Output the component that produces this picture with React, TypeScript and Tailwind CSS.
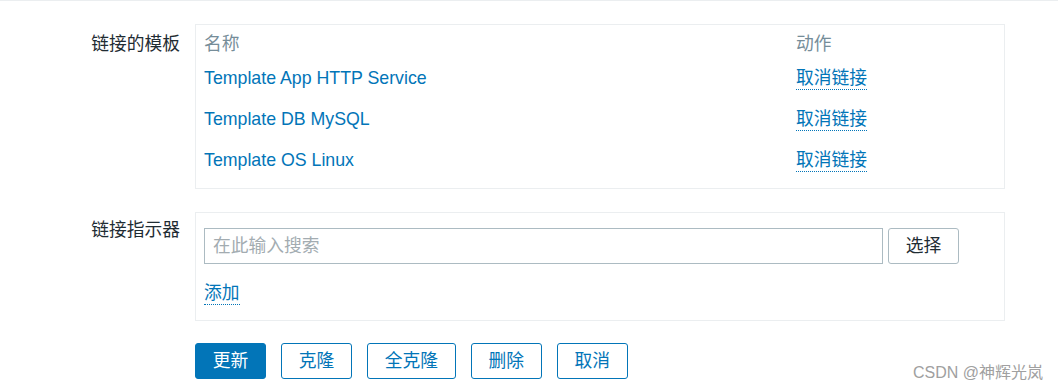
import React from "react";

const font = "font-['Liberation_Sans','Noto_Sans_CJK_SC',sans-serif]";

function Link({ children }: { children: React.ReactNode }) {
  return (
    <span className="block leading-[22px] text-[#0275b8] border-b border-dotted border-[#0275b8]">
      {children}
    </span>
  );
}

const templates = ["Template App HTTP Service", "Template DB MySQL", "Template OS Linux"];

export default function App() {
  return (
    <div className={`relative w-[1058px] h-[389px] bg-white border-t border-[#ebeef0] text-[17.75px] leading-[22px] text-[#1f2c33] ${font}`}>
      <div className="grid grid-cols-[180px_810px] gap-x-[15px] pt-[23px] items-start">
        {/* Row 1 */}
        <div className="text-right pt-[9px]">链接的模板</div>
        <div className="border border-[#ebeef0] px-[8px] pt-[8px] pb-[16px]">
          <div className="grid grid-cols-[592px_1fr]">
            <div className="text-[#768d99]">名称</div>
            <div className="text-[#768d99]">动作</div>
          </div>
          {templates.map((t, i) => (
            <div key={t} className={`grid grid-cols-[592px_1fr] items-start ${i === 0 ? "mt-[12px]" : "mt-[18px]"}`}>
              <div className="text-[#0275b8]">{t}</div>
              <div className="flex">
                <Link>取消链接</Link>
              </div>
            </div>
          ))}
        </div>

        {/* Row 2 */}
        <div className="text-right pt-[7px] mt-[23px]">链接指示器</div>
        <div className="mt-[23px] border border-[#ebeef0] px-[8px] pt-[15px] pb-[15px]">
          <div className="flex items-center gap-[5px]">
            <div className="w-[679px] h-[36px] border border-[#acbbc2] px-[8px] flex items-center text-[#a3acb1]">
              在此输入搜索
            </div>
            <button className="h-[36px] px-[16.75px] border border-[#acbbc2] rounded-[3px] bg-white text-[#1f2c33]">
              选择
            </button>
          </div>
          <div className="mt-[18px] flex">
            <Link>添加</Link>
          </div>
        </div>

        {/* Buttons */}
        <div />
        <div className="mt-[22px] flex gap-[15px]">
          <button className="h-[36px] px-[16.75px] rounded-[3px] bg-[#0275b8] border border-[#0275b8] text-white">更新</button>
          {["克隆", "全克隆", "删除", "取消"].map((b) => (
            <button key={b} className="h-[36px] px-[16.75px] rounded-[3px] bg-white border border-[#0275b8] text-[#0275b8]">
              {b}
            </button>
          ))}
        </div>
      </div>

      <div className="absolute right-[15px] bottom-[6px] text-[16px] leading-[20px] text-[#a0a0a0]">
        CSDN @神辉光岚
      </div>
    </div>
  );
}
